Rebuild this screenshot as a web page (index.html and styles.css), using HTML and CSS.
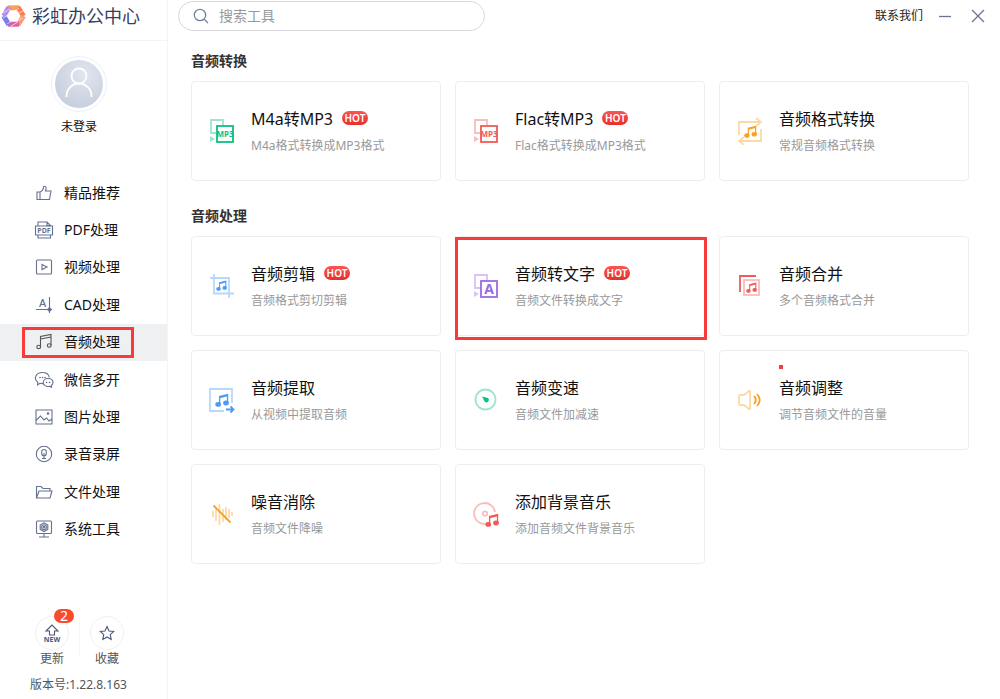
FILE: index.html
```html
<!DOCTYPE html>
<html lang="zh-CN">
<head>
<meta charset="utf-8">
<meta name="viewport" content="width=device-width, initial-scale=1">
<title>彩虹办公中心</title>
<link rel="stylesheet" href="styles.css">
</head>
<body>
<svg class="defs" width="0" height="0" aria-hidden="true">
  <defs>
    <symbol id="note" viewBox="0 0 16 16">
      <path d="M5.300 12.600V4L14.300 1.800v9.400" fill="none" stroke="currentColor" stroke-width="1.500"/>
      <path d="M5.300 5L14.300 2.800" fill="none" stroke="currentColor" stroke-width="2"/>
      <ellipse cx="3.600" cy="13" rx="2.400" ry="1.900" fill="currentColor"/>
      <ellipse cx="12.600" cy="11.500" rx="2.400" ry="1.900" fill="currentColor"/>
    </symbol>
    <radialGradient id="face" cx="0.6" cy="0.3" r="0.8"><stop offset="0" stop-color="#e1e6ef"/><stop offset="1" stop-color="#c3ccdb"/></radialGradient>
  </defs>
</svg>
<div class="app">
  <aside class="sidebar">
    <div class="brand">
      <svg width="25" height="24" viewBox="0 0 25 24" fill="none" stroke-width="5" aria-hidden="true">
        <path d="M7 3.800H18" stroke="#f9a350"/>
        <path d="M17 3L22.500 12" stroke="#fb7d55"/>
        <path d="M22.500 12L17 21" stroke="#fa9a72"/>
        <path d="M18 20.200H7" stroke="#e0609f"/>
        <path d="M8 21L2.700 12" stroke="#7a7cf0"/>
        <path d="M2.700 12L8 3" stroke="#b58be8"/>
        <circle cx="12.500" cy="12" r="5" fill="#fff"/>
        <path d="M2 9l7-4M2 14l5-3M6 20l5-3M10 22l7-4M16 17l6-3M18 9l6-3M13 7l5-3" stroke="#fff" stroke-width="0.600"/>
      </svg>
      <span class="brand-name">彩虹办公中心</span>
    </div>
    <div class="account">
      <span class="avatar">
        <svg width="48" height="48" viewBox="0 0 48 48" fill="none" stroke="#fff" stroke-width="1.800" aria-hidden="true">
          <circle cx="24" cy="24" r="24" fill="url(#face)" stroke="none"/>
          <circle cx="24" cy="16" r="7.500"/><path d="M11.500 37v-1a12.500 12.500 0 0 1 25 0v1"/>
        </svg>
      </span>
      <span>未登录</span>
    </div>
    <nav class="nav">
      <a class="nav-item" href="#"><svg viewBox="0 0 18 18"><path d="M2 8h3v7.500H2zM5 8c2.500-1 3.500-3 3.500-5.500 1.500-.8 3 .5 2.500 2.500L10.500 7H16l-1.500 8.500H5"/></svg>精品推荐</a>
      <a class="nav-item" href="#"><svg viewBox="0 0 18 18"><path d="M3 5V1h9l3.500 3.500V5M12 1v3.500h3.500M3 14v3h12.500v-3M.5 5h17v9H.5z"/><text x="9" y="12.300" text-anchor="middle" font-size="7">PDF</text></svg>PDF处理</a>
      <a class="nav-item" href="#"><svg viewBox="0 0 18 18"><rect x="1.500" y="2" width="15" height="14" rx="1"/><path d="M7 6.500l5 2.500-5 2.500z"/></svg>视频处理</a>
      <a class="nav-item" href="#"><svg viewBox="0 0 18 18"><path d="M1 13.500h16M14.500 1v16"/><text class="light" x="7.500" y="10.500" text-anchor="middle" font-size="11">A</text><circle cx="14.500" cy="13.500" r="1.500" class="solid"/></svg>CAD处理</a>
      <a class="nav-item active" href="#" aria-current="page"><svg viewBox="0 0 18 18"><path d="M5.500 14V3.500L16 1.500V12.500M5.500 6L16 4"/><ellipse cx="3.700" cy="14" rx="1.900" ry="1.700"/><ellipse cx="14.200" cy="12.500" rx="1.900" ry="1.700"/></svg>音频处理</a>
      <a class="nav-item" href="#"><svg viewBox="0 0 18 18"><path d="M8 12.500c-1 .2-2 .1-3-.2L2.500 14l.3-2.800C-2 7.500 1 1.500 7.300 1.500c4 0 6.500 2 7 5"/><path d="M13 7.500c3 0 5 1.800 5 4 0 1.200-.7 2.300-1.700 3v1.800l-1.800-1c-3.500.7-6.300-1.300-6.300-3.800 0-2.200 2-4 4.800-4z"/><path class="dots" d="M5 6.500h.1M7.500 6.500h.1M10 6.500h.1M11.500 11.500h.1M14.500 11.500h.1"/></svg>微信多开</a>
      <a class="nav-item" href="#"><svg viewBox="0 0 18 18"><path d="M1 2h16v14H1zM1 12.500l4.500-4.500 3.500 4 2.500-2 2.500 3 3-2"/><circle cx="13" cy="5.500" r=".8" class="solid"/></svg>图片处理</a>
      <a class="nav-item" href="#"><svg viewBox="0 0 18 18"><circle cx="9" cy="9" r="7.700"/><rect x="6.700" y="4.500" width="4.600" height="6.300" rx="2.300"/><path d="M9 8v5.500M7 13.500h4"/></svg>录音录屏</a>
      <a class="nav-item" href="#"><svg viewBox="0 0 18 18"><path d="M1.500 15V3.500h4.500l2 2h7V8M1.500 15L4 8h13l-2 7z"/></svg>文件处理</a>
      <a class="nav-item" href="#"><svg viewBox="0 0 18 18"><rect x="1.500" y="1" width="15" height="12.500" rx="1"/><path d="M9 13.500V17M4 17h10M9 2.800l3.800 2.200v4.400L9 11.600 5.200 9.400V5z"/><circle cx="9" cy="7.200" r="2.400"/><circle cx="9" cy="7.200" r=".8"/></svg>系统工具</a>
    </nav>
    <div class="side-foot">
      <div class="quick">
        <button class="quick-btn" type="button">
          <span class="ring">
            <svg width="18" height="18" viewBox="0 0 18 18"><path d="M9 1L3 7h3.500v4h5V7H15z"/><text x="9" y="18" text-anchor="middle" font-size="7">NEW</text></svg>
            <span class="count">2</span>
          </span>
          更新
        </button>
        <span class="split"></span>
        <button class="quick-btn" type="button">
          <span class="ring">
            <svg width="18" height="18" viewBox="0 0 18 18"><path d="M9 2.500l2 4.500 4.700.5-3.500 3.200 1 4.800L9 13l-4.200 2.500 1-4.800-3.500-3.200L7 7z"/></svg>
          </span>
          收藏
        </button>
      </div>
      <div class="version">版本号:1.22.8.163</div>
    </div>
  </aside>

  <div class="content">
    <header class="topbar">
      <label class="search">
        <svg width="16" height="16" viewBox="0 0 16 16" fill="none" stroke="#7482a3" stroke-width="1.300" aria-hidden="true"><circle cx="7" cy="7" r="5.700"/><path d="M11 11l4 4"/></svg>
        <input type="search" placeholder="搜索工具" aria-label="搜索工具">
      </label>
      <div class="window-tools">
        <a href="#">联系我们</a>
        <button type="button" aria-label="最小化"><svg width="14" height="14" viewBox="0 0 14 14"><path d="M1 7.500h12"/></svg></button>
        <button type="button" aria-label="关闭"><svg width="14" height="14" viewBox="0 0 14 14"><path d="M1 1l12 12M13 1L1 13"/></svg></button>
      </div>
    </header>

    <main class="main">
      <section>
        <h2>音频转换</h2>
        <div class="grid">
          <a class="card" href="#">
            <svg class="icon green" viewBox="0 0 28 28"><path class="pale" d="M8 16H3V3h12v5"/><path class="pale solid" d="M2 19v6l5-3z"/><rect x="9" y="9" width="16" height="16"/><text x="17" y="20" text-anchor="middle" font-size="8">MP3</text></svg>
            <div><h3>M4a转MP3<span class="hot">HOT</span></h3><p>M4a格式转换成MP3格式</p></div>
          </a>
          <a class="card" href="#">
            <svg class="icon red" viewBox="0 0 28 28"><path class="pale" d="M8 16H3V3h12v5"/><path class="pale solid" d="M2 19v6l5-3z"/><rect x="9" y="9" width="16" height="16"/><text x="17" y="20" text-anchor="middle" font-size="8">MP3</text></svg>
            <div><h3>Flac转MP3<span class="hot">HOT</span></h3><p>Flac格式转换成MP3格式</p></div>
          </a>
          <a class="card" href="#">
            <svg class="icon orange" viewBox="0 0 28 28"><path class="pale" d="M3 18V5h22M20 1l5 4-5 4M25 12v12H3M8 20l-5 4 5 4"/><use href="#note" x="8" y="8" width="13" height="13"/></svg>
            <div><h3>音频格式转换</h3><p>常规音频格式转换</p></div>
          </a>
        </div>
      </section>

      <section>
        <h2>音频处理</h2>
        <div class="grid">
          <a class="card" href="#">
            <svg class="icon blue" viewBox="0 0 28 28"><path class="pale" d="M2 6h19v20M6 2v19.500h20"/><use href="#note" x="8" y="8" width="11" height="11"/></svg>
            <div><h3>音频剪辑<span class="hot">HOT</span></h3><p>音频格式剪切剪辑</p></div>
          </a>
          <a class="card marked" href="#">
            <svg class="icon purple" viewBox="0 0 28 28"><path class="pale" d="M8 16H3V3h12v5"/><path class="pale solid" d="M2 19v6l5-3z"/><rect x="9" y="9" width="16" height="16"/><text x="17" y="22" text-anchor="middle" font-size="14">A</text></svg>
            <div><h3>音频转文字<span class="hot">HOT</span></h3><p>音频文件转换成文字</p></div>
          </a>
          <a class="card" href="#">
            <svg class="icon red" viewBox="0 0 28 28"><path d="M4 20V4h16"/><rect class="pale" x="8" y="8" width="15" height="15"/><use href="#note" x="10" y="10" width="11" height="11"/></svg>
            <div><h3>音频合并</h3><p>多个音频格式合并</p></div>
          </a>
          <a class="card" href="#">
            <svg class="icon blue" viewBox="0 0 28 28"><path class="pale" d="M16 25H2V3h22v14"/><path d="M18 23.500h7M22.500 20.500l3 3-3 3"/><use href="#note" x="7" y="7" width="14" height="14"/></svg>
            <div><h3>音频提取</h3><p>从视频中提取音频</p></div>
          </a>
          <a class="card" href="#">
            <svg class="icon green" viewBox="0 0 28 28"><circle class="pale" cx="13.500" cy="13.500" r="10"/><path class="solid" d="M10 10.500l6 1.500a2.300 2.300 0 1 1-3.200 3.700z"/></svg>
            <div><h3>音频变速</h3><p>音频文件加减速</p></div>
          </a>
          <a class="card dotted" href="#">
            <svg class="icon orange" viewBox="0 0 28 28"><path class="pale" d="M4 9h4l5-4h1v18h-1l-5-4H4q-1 0-1-1v-8q0-1 1-1z"/><path d="M18 10q3.500 4 0 8M21 8q5.500 6 0 12"/></svg>
            <div><h3>音频调整</h3><p>调节音频文件的音量</p></div>
          </a>
          <a class="card" href="#">
            <svg class="icon orange" viewBox="0 0 28 28"><path class="pale" d="M5 11v6M8 7v14M11.500 4v21M15 9v13M18 7v13M21 9v9M24 12v4"/><path d="M5.500 5.500l17 17"/></svg>
            <div><h3>噪音消除</h3><p>音频文件降噪</p></div>
          </a>
          <a class="card" href="#">
            <svg class="icon red" viewBox="0 0 28 28"><path class="pale" d="M13 24a10.500 10.500 0 1 1 10-12"/><circle class="pale" cx="13" cy="13.500" r="2.200"/><use href="#note" x="13" y="13" width="14" height="14"/></svg>
            <div><h3>添加背景音乐</h3><p>添加音频文件背景音乐</p></div>
          </a>
        </div>
      </section>
    </main>
  </div>
</div>
</body>
</html>
```
FILE: styles.css
```css
* { box-sizing: border-box; }

body {
  margin: 0;
  background: #fff;
  color: #111;
  font-family: "Noto Sans", "Noto Sans CJK SC", sans-serif;
  font-size: 12px;
  line-height: 18px;
}

a { color: inherit; text-decoration: none; }
h2, h3, p { margin: 0; }
button { padding: 0; border: 0; background: none; font: inherit; color: inherit; cursor: pointer; }
svg { flex: none; }
.defs { position: absolute; }

.app { display: flex; min-height: 100vh; }

.sidebar {
  display: flex;
  flex-direction: column;
  flex: none;
  width: 168px;
  border-right: 1px solid #f4f4f6;
}

.brand {
  display: flex;
  align-items: center;
  gap: 6px;
  height: 41px;
  padding: 0 0 8px 1px;
  border-bottom: 1px solid #f4f4f6;
}
.brand-name { font-size: 18px; line-height: 24px; color: #35405f; }

.account {
  display: flex;
  flex-direction: column;
  align-items: center;
  gap: 6px;
  padding: 15px 9px 0 0;
}
.avatar {
  display: grid;
  place-items: center;
  width: 56px;
  height: 56px;
  border: 1px solid #eef0f6;
  border-radius: 50%;
}

.nav {
  display: grid;
  grid-auto-rows: 1fr;
  height: 374px;
  margin-top: 38px;
}
.nav-item {
  position: relative;
  display: flex;
  align-items: center;
  gap: 11px;
  padding-left: 35px;
  font-size: 14px;
  line-height: 20px;
}
.nav-item svg, .quick-btn svg {
  width: 18px;
  height: 18px;
  overflow: visible;
  fill: none;
  stroke: #66718f;
  stroke-width: 1.1;
}
.nav-item text, .quick-btn text { fill: #66718f; stroke: none; font-weight: 700; }
.nav-item .light { font-weight: 500; }
.nav-item .solid { fill: #66718f; }
.nav-item .dots { stroke-width: 1.6; stroke-linecap: round; }
.nav-item.active { background: #eff0f2; }
.nav-item.active svg { stroke: #555; }
.nav-item.active::after {
  content: "";
  position: absolute;
  inset: 3px 33px 3px 22px;
  border: 3px solid #f83a3a;
}

.side-foot { margin-top: auto; padding: 20px 0 5px; color: #555; }
.quick {
  display: flex;
  gap: 10px;
  padding-left: 35px;
}
.quick-btn { display: flex; flex-direction: column; align-items: center; width: 34px; }
.quick-btn svg { stroke: #4c5878; }
.quick-btn text { fill: #4c5878; }
.ring {
  position: relative;
  display: grid;
  place-items: center;
  width: 34px;
  height: 34px;
  border: 1px solid #f0f0f2;
  border-radius: 50%;
}
.count {
  position: absolute;
  top: -8px;
  right: -6px;
  width: 20px;
  height: 14px;
  border-radius: 7px;
  background: #fa4a2e;
  color: #fff;
  font-size: 14px;
  line-height: 14px;
  text-align: center;
}
.split { width: 1px; height: 40px; background: #f6f6f8; }
.version { padding: 8px 0 0 30px; }

.content { flex: 1; min-width: 0; }

.topbar {
  display: flex;
  align-items: center;
  justify-content: space-between;
  padding: 1px 15px 0 10px;
}
.search {
  display: flex;
  align-items: center;
  gap: 10px;
  width: 307px;
  height: 30px;
  padding: 0 14px;
  border: 1px solid #d8d8dc;
  border-radius: 15px;
}
.search input {
  flex: 1;
  min-width: 0;
  padding: 0;
  border: 0;
  outline: 0;
  background: none;
  font: inherit;
  font-size: 14px;
}
.search input::placeholder { color: #999; }

.window-tools { display: flex; align-items: center; gap: 19px; color: #222; }
.window-tools a { margin-right: -4px; }
.window-tools svg { display: block; fill: none; stroke: #6a7591; stroke-width: 1.3; }

.main {
  display: flex;
  flex-direction: column;
  gap: 25px;
  padding: 20px 31px 20px 23px;
}
h2 { margin-bottom: 10px; font-size: 14px; line-height: 20px; color: #333; }
.grid { display: grid; grid-template-columns: repeat(3, 1fr); gap: 14px; }

.card {
  position: relative;
  display: flex;
  align-items: center;
  gap: 15px;
  min-height: 100px;
  padding: 0 16px;
  border: 1px solid #ededed;
  border-radius: 4px;
}
.card h3 {
  display: flex;
  align-items: center;
  gap: 9px;
  margin-bottom: 6px;
  font-size: 16px;
  font-weight: 400;
  line-height: 24px;
}
.card p { color: #999; }
.hot {
  width: 26px;
  margin-bottom: 2px;
  border-radius: 7px;
  background: linear-gradient(#fb5555, #e62f2a);
  color: #fff;
  font-size: 10px;
  font-weight: 600;
  line-height: 14px;
  text-align: center;
}
.card.marked::after {
  content: "";
  position: absolute;
  inset: 0 -3px -5px -1px;
  border: 3px solid #f83a3a;
}
.card.dotted::after {
  content: "";
  position: absolute;
  top: 14px;
  left: 59px;
  width: 4px;
  height: 4px;
  background: #f83a3a;
}

.icon {
  width: 28px;
  height: 28px;
  fill: none;
  stroke: currentColor;
  stroke-width: 1.8;
}
.icon text { fill: currentColor; stroke: none; font-weight: 700; }
.icon .pale { opacity: 0.4; }
.icon .solid { fill: currentColor; stroke: none; }
.green { color: #0fbf7c; }
.red { color: #f05a57; }
.orange { color: #fba01f; }
.blue { color: #4a9bf8; }
.purple { color: #9a6be8; }
```
